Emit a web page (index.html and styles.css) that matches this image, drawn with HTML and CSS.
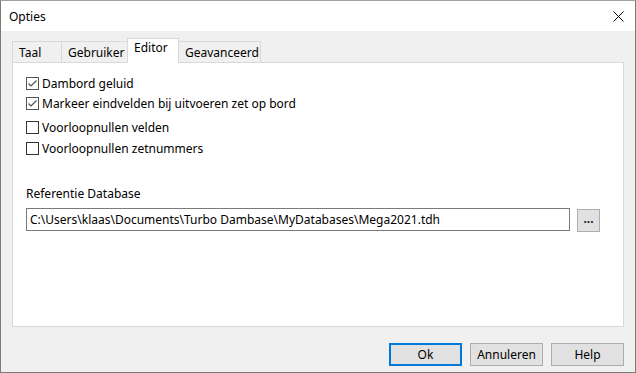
FILE: index.html
```html
<!DOCTYPE html>
<html lang="nl">
<head>
    <meta charset="UTF-8">
    <title>Opties</title>
    <link rel="stylesheet" href="styles.css">
</head>
<body>
    <div class="window">
        <div class="titlebar">
            <span class="title">Opties</span>
            <svg class="close" width="11" height="11" viewBox="0 0 11 11">
                <path d="M0.5 0.5 L10.5 10.5 M10.5 0.5 L0.5 10.5" stroke="#000" stroke-width="1" fill="none"/>
            </svg>
        </div>

        <div class="content">
            <div class="tabs">
                <div class="tab tab-taal">Taal</div>
                <div class="tab tab-gebruiker">Gebruiker</div>
                <div class="tab tab-editor active">Editor</div>
                <div class="tab tab-geavanceerd">Geavanceerd</div>
            </div>

            <div class="panel">
                <div class="check-row row-1">
                    <span class="box checked">
                        <svg width="11" height="11" viewBox="0 0 11 11"><path d="M1.5 5.5 L4 8 L9.5 2.5" stroke="#505050" stroke-width="1.2" fill="none"/></svg>
                    </span>
                    <span>Dambord geluid</span>
                </div>
                <div class="check-row row-2">
                    <span class="box checked">
                        <svg width="11" height="11" viewBox="0 0 11 11"><path d="M1.5 5.5 L4 8 L9.5 2.5" stroke="#505050" stroke-width="1.2" fill="none"/></svg>
                    </span>
                    <span>Markeer eindvelden bij uitvoeren zet op bord</span>
                </div>
                <div class="check-row row-3">
                    <span class="box"></span>
                    <span>Voorloopnullen velden</span>
                </div>
                <div class="check-row row-4">
                    <span class="box"></span>
                    <span>Voorloopnullen zetnummers</span>
                </div>

                <div class="ref-label">Referentie Database</div>
                <div class="ref-row">
                    <div class="textbox">C:\Users\klaas\Documents\Turbo Dambase\MyDatabases\Mega2021.tdh</div>
                    <div class="browse">...</div>
                </div>
            </div>

            <div class="buttons">
                <div class="btn btn-default">Ok</div>
                <div class="btn">Annuleren</div>
                <div class="btn">Help</div>
            </div>
        </div>
    </div>
</body>
</html>
```

FILE: styles.css
```css
* {
    margin: 0;
    padding: 0;
    box-sizing: border-box;
}

body {
    font-family: "Noto Sans", "Open Sans", sans-serif;
    font-size: 12px;
    color: #000;
    background: #f0f0f0;
}

.window {
    width: 636px;
    height: 373px;
    border: 1px solid #7a7a7a;
    border-top-color: #a0a0a0;
    background: #f0f0f0;
    display: flex;
    flex-direction: column;
}

.titlebar {
    height: 30px;
    background: #fff;
    display: flex;
    align-items: center;
    padding: 0 0 0 8px;
}

.title {
    flex-grow: 1;
    font-size: 12px;
}

.close {
    margin-right: 11px;
}

.content {
    flex-grow: 1;
    padding: 10px 11px 0 11px;
    display: flex;
    flex-direction: column;
}

.tabs {
    display: flex;
    height: 21px;
    align-items: flex-end;
}

.tab {
    height: 21px;
    border: 1px solid #d9d9d9;
    border-bottom: none;
    background: #f0f0f0;
    padding: 2px 0 0 6px;
    line-height: 17px;
    margin-right: -1px;
}

.tab-taal { width: 50px; }
.tab-gebruiker { width: 67px; }
.tab-editor { width: 52px; }
.tab-geavanceerd { width: 83px; }

.tab.active {
    height: 24px;
    background: #fff;
    padding-top: 0;
    position: relative;
    z-index: 1;
    margin-bottom: -1px;
    height: 25px;
}

.panel {
    width: 612px;
    height: 265px;
    background: #fff;
    border: 1px solid #d9d9d9;
    padding: 10px 0 0 13px;
}

.check-row {
    display: flex;
    align-items: center;
    height: 20px;
    gap: 3px;
}

.row-3 { margin-top: 4px; }
.row-4 { margin-top: 1px; }

.box {
    width: 13px;
    height: 13px;
    border: 1px solid #333;
    background: #fff;
    display: flex;
    align-items: center;
    justify-content: center;
}

.box.checked {
    border-color: #555;
}

.ref-label {
    margin-top: 26px;
    height: 20px;
    line-height: 20px;
}

.ref-row {
    display: flex;
    align-items: flex-start;
    margin-top: 4px;
    gap: 7px;
}

.textbox {
    width: 544px;
    height: 23px;
    border: 1px solid #7a7a7a;
    background: #fff;
    padding-left: 3px;
    line-height: 21px;
    white-space: nowrap;
}

.browse {
    width: 23px;
    height: 23px;
    margin-top: 1px;
    border: 1px solid #adadad;
    background: #e1e1e1;
    text-align: center;
    line-height: 18px;
    font-weight: bold;
    color: #1a1a1a;
}

.buttons {
    display: flex;
    justify-content: flex-end;
    gap: 8px;
    margin-top: 16px;
    padding-right: 0;
    width: 612px;
}

.btn {
    width: 73px;
    height: 23px;
    border: 1px solid #adadad;
    background: #e1e1e1;
    text-align: center;
    line-height: 21px;
}

.btn-default {
    border: 2px solid #0078d7;
    line-height: 19px;
}
```
